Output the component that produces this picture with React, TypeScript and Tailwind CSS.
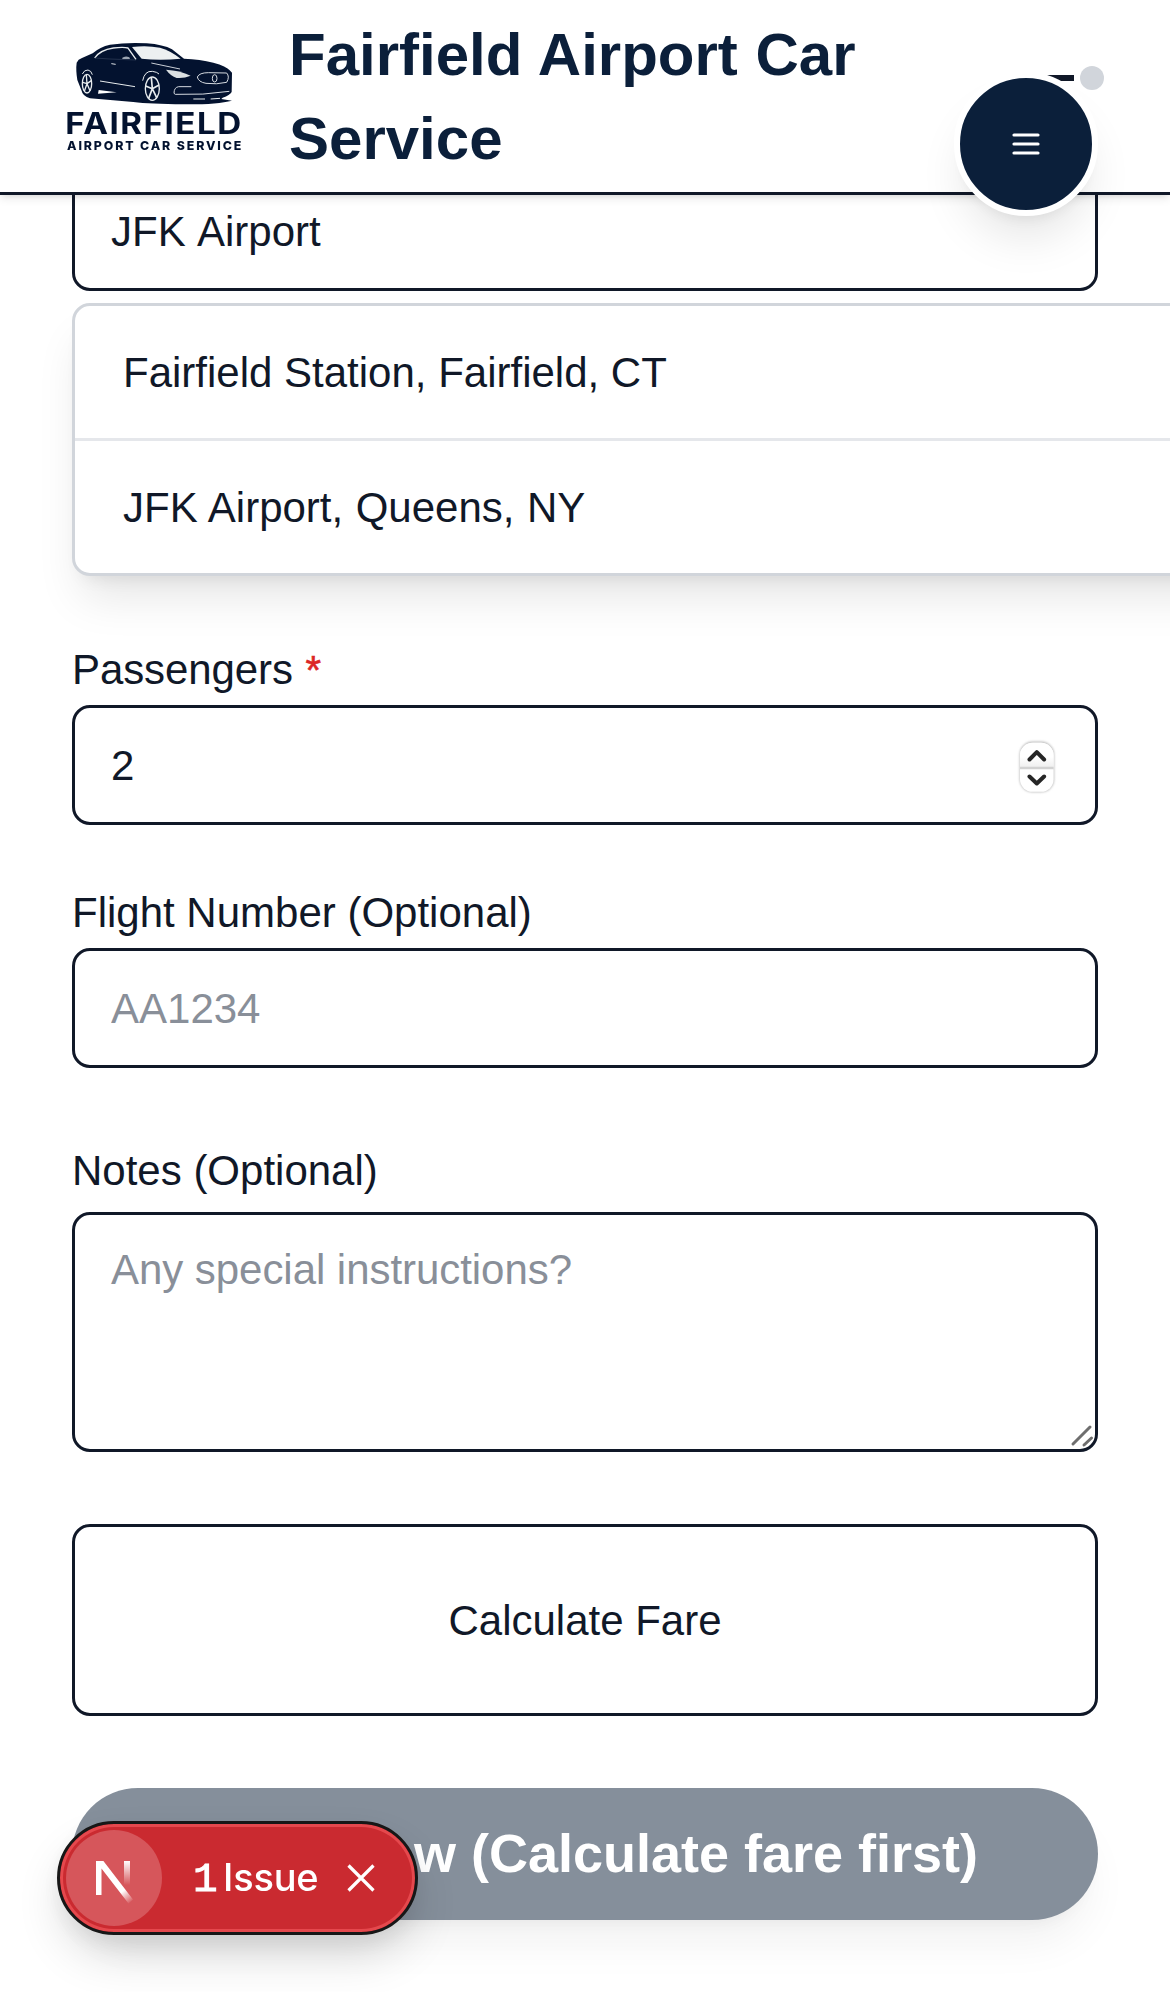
import React from "react";

const FIELD =
  "block w-full rounded-[18px] border-[3px] border-gray-900 bg-white px-9 text-[42px] text-gray-900 placeholder:text-[#898f99] placeholder:opacity-100 outline-none";

function Logo() {
  return (
    <svg viewBox="0 0 630 390" className="h-[130px] w-[210px] shrink-0" fill="none">
      <path
        d="M80 98 Q84 88 96 84 L128 70 Q150 50 180 44 Q230 37 290 40 Q340 44 366 58 L402 86 Q450 87 490 98 Q530 109 539 121 L546 128 L545 186 Q540 196 518 203 L514 207 L546 212 Q500 224 400 223 Q300 222 250 216 L120 205 Q98 199 94 180 L82 150 Q77 120 80 98Z"
        fill="#03122f"
      />
      <path d="M246 51 Q290 45 330 53 Q362 62 392 86 Q330 92 275 86 Z" fill="#edf0f1" />
      <path d="M134 84 Q150 60 190 54 Q220 50 234 54 L258 88" stroke="#e8ecee" strokeWidth="4" />
      <path d="M134 84 L180 87 L258 90" stroke="#42506a" strokeWidth="1.5" />
      <path d="M216 84 Q226 76 238 82 L240 87 L218 87Z" fill="#9ba4b2" />
      <path d="M184 101 L197 103" stroke="#dfe3e7" strokeWidth="3" />
      <path d="M304 99 L390 117" stroke="#c9ced6" strokeWidth="3" />
      <path d="M150 153 L255 170" stroke="#e8ecee" strokeWidth="3" />
      <path d="M146 180 L200 187 L144 191Z" fill="#fff" />
      <path d="M348 119 Q390 121 422 137 Q402 146 380 144 Q362 138 348 119Z" fill="#dce1e3" />
      <path d="M442 141 Q448 128 475 128 L530 129 Q540 140 530 157 Q500 164 468 160 Q445 156 442 141Z" stroke="#d5dae0" strokeWidth="3" />
      <ellipse cx="494" cy="145" rx="7" ry="11" stroke="#d5dae0" strokeWidth="3" />
      <path d="M424 170 L386 170 Q372 172 372 190 L376 193 Q460 196 538 184" stroke="#d5dae0" strokeWidth="3" />
      <path d="M430 207 L465 207 M482 207 L510 205" stroke="#e8ecee" strokeWidth="3" />
      <path d="M97 132 Q103 119 114 120 Q124 122 127 134" stroke="#e8ecee" strokeWidth="3" />
      <path d="M278 152 Q284 122 307 124 Q322 126 327 132" stroke="#e8ecee" strokeWidth="3" />
      <g stroke="#e8ecee">
        <ellipse cx="111" cy="161" rx="14" ry="28" strokeWidth="4" />
        <path d="M111 161 L109 135 M111 161 L98 157 M111 161 L124 152 M111 161 L103 184 M111 161 L120 182" strokeWidth="4" />
        <ellipse cx="307" cy="176" rx="21" ry="35" strokeWidth="4" />
        <path d="M307 176 L304 142 M307 176 L287 168 M307 176 L327 165 M307 176 L296 205 M307 176 L320 203" strokeWidth="5" />
      </g>
      <text x="46" y="311" textLength="532" lengthAdjust="spacingAndGlyphs" letterSpacing="4" fontFamily="Inter" fontWeight="750" fontSize="88" fill="#03122f">
        FAIRFIELD
      </text>
      <text x="51" y="359" textLength="523" lengthAdjust="spacing" fontFamily="Inter" fontWeight="800" fontSize="37" fill="#03122f">
        AIRPORT CAR SERVICE
      </text>
    </svg>
  );
}

function Header() {
  return (
    <header className="fixed inset-x-0 top-0 z-20 flex h-[195px] items-start border-b-[3px] border-gray-900 bg-white pl-[50px] shadow-[0_3px_9px_rgba(0,0,0,0.1),0_3px_6px_-3px_rgba(0,0,0,0.1)]">
      <div className="mt-[30px]">
        <Logo />
      </div>
      <h1 className="ml-[29px] mt-[13px] w-[620px] text-[60px] leading-[84px] font-bold text-[#0b1f3a] [word-spacing:1px]">
        Fairfield Airport Car Service
      </h1>
      <div className="mt-[66px] ml-auto mr-[66px] flex items-center gap-1.5">
        <span className="h-1.5 w-12 bg-gray-900" />
        <span className="size-6 rounded-full bg-[#d1d5db]" />
      </div>
    </header>
  );
}

function MenuButton() {
  return (
    <button className="fixed top-[72px] right-[72px] z-30 flex size-36 items-center justify-center rounded-full border-[6px] border-white bg-[#0b1f3a] shadow-[0_30px_45px_-9px_rgba(0,0,0,0.1),0_12px_18px_-12px_rgba(0,0,0,0.1)]">
      <svg viewBox="0 0 36 36" className="size-9" stroke="white" strokeWidth="3.2" strokeLinecap="round">
        <path d="M6 9H30M6 18H30M6 27H30" />
      </svg>
    </button>
  );
}

function Stepper() {
  return (
    <svg viewBox="0 0 42 58" className="absolute top-[33px] right-[40px] h-[58px] w-[42px]" fill="none">
      <defs>
        <linearGradient id="up" x1="0" y1="0" x2="0" y2="1">
          <stop offset="0.55" stopColor="#fff" />
          <stop offset="1" stopColor="#eee" />
        </linearGradient>
        <filter id="soft" x="-20%" y="-20%" width="140%" height="140%">
          <feGaussianBlur stdDeviation="1.2" />
        </filter>
      </defs>
      <rect x="3.6" y="3.6" width="34.6" height="50.6" rx="13" fill="#bdbdbd" filter="url(#soft)" />
      <rect x="4" y="4.8" width="33.6" height="49" rx="12.5" fill="white" />
      <path d="M4 30V17.3A12.5 12.5 0 0 1 16.5 4.8H25.1A12.5 12.5 0 0 1 37.6 17.3V30Z" fill="url(#up)" />
      <path d="M4 30H37.6" stroke="#d2d2d2" strokeWidth="2.4" />
      <path d="M13.5 21.5L20.8 14.2L28.1 21.5M13.5 38.5L20.8 45.5L28.1 38.5" stroke="#262626" strokeWidth="4" strokeLinecap="round" strokeLinejoin="round" />
    </svg>
  );
}

function IssueToast() {
  return (
    <div className="fixed top-[1821px] left-[57px] z-30 flex h-[114px] w-[361px] items-center rounded-full border-[3px] border-[#171717] bg-[#ca2a30] pl-1.5 shadow-[inset_0_0_0_3px_#e5484d,0_24px_48px_-6px_rgba(0,0,0,0.16),0_9px_24px_rgba(0,0,0,0.05)]">
      <svg viewBox="0 0 96 96" className="size-24 shrink-0" fill="none">
        <defs>
          <linearGradient id="diag" gradientUnits="userSpaceOnUse" x1="52" y1="55" x2="65" y2="73">
            <stop stopColor="#fff" />
            <stop offset="0.35" stopColor="#fff" />
            <stop offset="1" stopColor="#fff" stopOpacity="0" />
          </linearGradient>
          <linearGradient id="bar" gradientUnits="userSpaceOnUse" x1="0" y1="31" x2="0" y2="55">
            <stop stopColor="#fff" />
            <stop offset="1" stopColor="#fff" stopOpacity="0" />
          </linearGradient>
        </defs>
        <circle cx="48" cy="48" r="48" fill="#d6565b" />
        <path d="M58 31H64V55H58Z" fill="url(#bar)" />
        <path d="M30 31H37.4L67 69.5L62.5 73.5L35.5 38.5V65H30Z" fill="url(#diag)" />
      </svg>
      <span className="ml-[31px] mt-0.5 flex w-[126px] items-baseline whitespace-nowrap text-white">
        <span className="w-[28px] font-['Liberation_Mono'] text-[41px] leading-none [-webkit-text-stroke:1px_white]">1</span>
        <span className="ml-0.5 font-['Inter'] text-[38px] leading-none font-medium tracking-[-0.2px]">Issue</span>
      </span>
      <svg viewBox="0 0 28 28" className="ml-7 size-7" stroke="white" strokeWidth="3.2">
        <path d="M1.5 1.5L26.5 26.5M26.5 1.5L1.5 26.5" />
      </svg>
    </div>
  );
}

export default function App() {
  return (
    <div className="relative h-[1992px] w-full overflow-hidden bg-white font-['Liberation_Sans',Arial,sans-serif] text-[42px] text-gray-900">
      <Header />
      <MenuButton />
      <main className="px-[72px] pt-[171px]">
        <div className="relative">
          <input className={FIELD + " h-[120px] pt-0.5 [word-spacing:2px]"} defaultValue="JFK Airport" />
          <ul className="absolute top-[132px] left-0 z-10 w-[1200px] rounded-[18px] border-[3px] border-[#d1d5db] bg-white shadow-[0_30px_45px_-9px_rgba(0,0,0,0.1),0_12px_18px_-12px_rgba(0,0,0,0.1)]">
            <li className="h-[135px] border-b-[3px] border-gray-200 px-12 leading-[134px]">Fairfield Station, Fairfield, CT</li>
            <li className="h-[132px] px-12 leading-[134px] [word-spacing:0.8px]">JFK Airport, Queens, NY</li>
          </ul>
        </div>

        <label className="mt-[349px] mb-[5px] block leading-[60px] tracking-[-0.1px]">
          Passengers <span className="ml-px text-[40px] leading-none text-[#dc2626] [-webkit-text-stroke:0.6px_#dc2626]">*</span>
        </label>
        <div className="relative">
          <input className={FIELD + " h-[120px] pt-0.5"} defaultValue="2" />
          <Stepper />
        </div>

        <label className="mt-[58px] mb-[5px] block leading-[60px]">Flight Number (Optional)</label>
        <input className={FIELD + " h-[120px] pt-0.5"} placeholder="AA1234" />

        <label className="mt-[73px] mb-[11px] block leading-[60px]">Notes (Optional)</label>
        <div className="relative">
          <textarea className={FIELD + " h-[240px] resize-none py-[25px] leading-[60px] tracking-[-0.05px]"} placeholder="Any special instructions?" />
          <svg viewBox="0 0 22 22" className="absolute right-[4px] bottom-[4px] size-[22px] overflow-visible" stroke="#6e6e6e" strokeWidth="3" strokeLinecap="round">
            <path d="M1 18L18 1M12 19L19.5 12" />
          </svg>
        </div>

        <button className="mt-[72px] block h-[192px] w-full rounded-[18px] border-[3px] border-gray-900 bg-white">
          Calculate Fare
        </button>
        <button className="mt-[72px] block h-[132px] w-full rounded-full bg-[#858f9b] pb-0.5 text-[54px] font-bold text-white shadow-[0_30px_45px_-9px_rgba(0,0,0,0.06),0_12px_18px_-12px_rgba(0,0,0,0.06)]">
          Book Now (Calculate fare first)
        </button>
      </main>
      <IssueToast />
    </div>
  );
}
